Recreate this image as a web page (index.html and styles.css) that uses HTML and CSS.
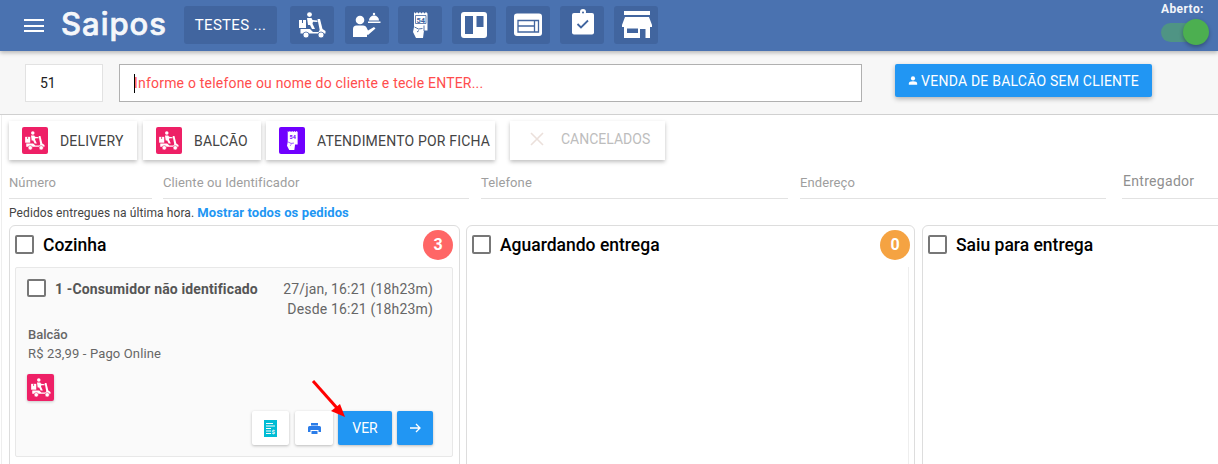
FILE: index.html
```html
<!DOCTYPE html>
<html lang="pt-BR">
<head>
<meta charset="utf-8">
<title>Saipos</title>
<link rel="stylesheet" href="styles.css">
</head>
<body>
<svg class="defs" width="0" height="0" aria-hidden="true">
  <symbol id="scooter" viewBox="0 0 27 26">
    <circle cx="10.500" cy="2.600" r="2.400" fill="#fff"/>
    <path fill="#fff" d="M8 6h4.500l1 2 5 .5V10l-4.500-.2-.5 2 2.500 5.200h-3l-2-4H9z"/>
    <path fill="#fff" d="M0 8h7v8H0z"/>
    <path fill="currentColor" d="M3 8h1v3H3z"/>
    <path fill="#fff" d="M18.500 7h2.500l2.500 10 3 2v2.500H1.500V17H11l3 3h5.500l1.200-2z"/>
    <circle cx="7" cy="23" r="3" fill="#fff" stroke="currentColor" stroke-width=".8"/>
    <circle cx="22" cy="23" r="3" fill="#fff" stroke="currentColor" stroke-width=".8"/>
  </symbol>
</svg>

<header class="topbar">
  <button class="menu" aria-label="Menu"><span></span><span></span><span></span></button>
  <div class="logo">Saipos</div>
  <div class="store">TESTES ...</div>
  <nav class="nav">
    <a class="nav-btn nav-first"><svg class="ico-scooter"><use href="#scooter"/></svg></a>
    <a class="nav-btn nav-second">
      <svg viewBox="0 0 44 38" class="fill">
        <circle cx="15" cy="14" r="4.300" fill="#fff"/>
        <path fill="#fff" d="M8 31V23q0-3.500 3.500-3.500H18q3 0 4 3l1 2 6-3.500 1.500 1.500L23 29l-1-.5V31z"/>
        <path fill="#fff" d="M23 15.500h12.500v1.500H23z"/>
        <path fill="#fff" d="M24 14.500a5 5 0 0 1 10 0z"/>
        <circle cx="29" cy="8" r="1.200" fill="#fff"/>
      </svg>
    </a>
    <a class="nav-btn">
      <svg viewBox="0 0 15 26" class="ico-ticket">
        <path fill="#fff" d="M1 0l1.500 1.500L4 0l1.500 1.500L7 0l1.500 1.500L10 0l1.500 1.500L13 0l1.500 1.500V18.500H11l-1 7.500H3L0 20l1-5z"/>
        <path fill="none" stroke="#41659f" stroke-width=".8" d="M2.500 3.500h10.500v8H2.500z"/>
        <text x="3.500" y="10.500" class="ticket-num">54</text>
        <path fill="none" stroke="#41659f" stroke-width=".9" d="M1.500 15l4 2 4-.5M4 20l2-1.500M11 13.500V19"/>
      </svg>
    </a>
    <a class="nav-btn">
      <svg viewBox="0 0 44 38" class="fill">
        <rect x="9" y="6" width="26" height="26" rx="3" fill="#fff"/>
        <rect x="13" y="10" width="8" height="18" fill="#41659f"/>
        <rect x="24.500" y="10" width="7" height="11" fill="#41659f"/>
      </svg>
    </a>
    <a class="nav-btn">
      <svg viewBox="0 0 44 38" class="fill">
        <rect x="8" y="7.500" width="28" height="22.500" rx="3" fill="#fff"/>
        <path fill="none" stroke="#41659f" stroke-width="1.300" d="M12 14.500h20.500v11.500H12zM12 20h16M28.500 14.500V26"/>
      </svg>
    </a>
    <a class="nav-btn">
      <svg viewBox="0 0 44 38" class="fill">
        <rect x="12" y="7" width="22" height="21.500" rx="2" fill="#fff"/>
        <circle cx="23" cy="6" r="3" fill="#fff"/>
        <circle cx="23" cy="6.500" r="1" fill="#41659f"/>
        <path fill="none" stroke="#41659f" stroke-width="1.800" d="M17.500 18l3.500 3.500 7-7"/>
      </svg>
    </a>
    <a class="nav-btn">
      <svg viewBox="0 0 44 38" class="fill">
        <path fill="#fff" d="M10 5h26v4H10zM11 11h24l3 8v2H8v-2z"/>
        <path fill="#fff" d="M10 21h26v11h-4.500V23H26v9H10z"/>
        <path fill="#41659f" d="M13 22.500h11v4.500H13z"/>
      </svg>
    </a>
  </nav>
  <div class="open">
    <div class="open-label">Aberto:</div>
    <div class="toggle"><span class="thumb"></span></div>
  </div>
</header>

<section class="toolbar">
  <div class="code">51</div>
  <div class="search"><span class="caret"></span>Informe o telefone ou nome do cliente e tecle ENTER...</div>
  <button class="sale">
    <svg viewBox="0 0 12 10" class="person"><circle cx="6" cy="2.500" r="2.500" fill="#fff"/><path fill="#fff" d="M1 10V8.500Q1 6 6 6t5 2.500V10z"/></svg>
    VENDA DE BALCÃO SEM CLIENTE
  </button>
</section>

<main class="content">
  <div class="tabs">
    <a class="tab tab-delivery"><span class="badge-ico pink"><svg><use href="#scooter"/></svg></span>DELIVERY</a>
    <a class="tab tab-balcao"><span class="badge-ico pink"><svg><use href="#scooter"/></svg></span>BALCÃO</a>
    <a class="tab tab-ficha"><span class="badge-ico purple">
      <svg viewBox="0 0 15 26" class="tk">
        <path fill="#fff" d="M1 0l1.500 1.500L4 0l1.500 1.500L7 0l1.500 1.500L10 0l1.500 1.500L13 0l1.500 1.500V18.500H11l-1 7.500H3L0 20l1-5z"/>
        <text x="3.500" y="10.500" class="ticket-num violet">54</text>
        <path fill="none" stroke="#7000ff" stroke-width=".9" d="M1.500 15l4 2 4-.5M4 20l2-1.500"/>
      </svg></span>ATENDIMENTO POR FICHA</a>
    <a class="tab tab-cancel"><svg viewBox="0 0 14 14" class="x"><path d="M1 1l12 12M13 1L1 13" stroke="#ebe0db" stroke-width="1.600" fill="none"/></svg>CANCELADOS</a>
  </div>

  <div class="filters">
    <div class="filter f-num">Número</div>
    <div class="filter f-client">Cliente ou Identificador</div>
    <div class="filter f-phone">Telefone</div>
    <div class="filter f-addr">Endereço</div>
    <div class="filter f-courier">Entregador</div>
  </div>

  <p class="info">Pedidos entregues na última hora. <a>Mostrar todos os pedidos</a></p>

  <div class="board">
    <section class="col col-a">
      <header class="col-head">
        <span class="check"></span><h2>Cozinha</h2><span class="count red">3</span>
      </header>
      <article class="card">
        <div class="card-top">
          <span class="check small"></span>
          <strong class="name">1 -Consumidor não identificado</strong>
          <div class="times"><div>27/jan, 16:21 (18h23m)</div><div>Desde 16:21 (18h23m)</div></div>
        </div>
        <div class="kind">Balcão</div>
        <div class="price">R$ 23,99 - Pago Online</div>
        <span class="badge-ico pink card-ico"><svg><use href="#scooter"/></svg></span>
        <div class="actions">
          <button class="act white w-receipt">
            <svg viewBox="0 0 13 17" class="receipt"><path fill="#00bcd4" d="M0 0h13v17H0z"/><path stroke="#fafafa" stroke-width="1" d="M2 3.500h7M2 6h9M2 8.500h5M2 11h5M2 13.500h5"/><text x="7.500" y="14" class="dollar">$</text></svg>
          </button>
          <button class="act white w-print">
            <svg viewBox="0 0 13 11" class="printer"><path fill="#2b7de9" d="M3 0h7v2.500H3zM1.500 3h10Q13 3 13 4.500V9h-2.500V7h-8v2H0V4.500Q0 3 1.500 3zM3.500 8h6v3h-6z"/></svg>
          </button>
          <button class="act blue w-ver">VER</button>
          <button class="act blue w-go">
            <svg viewBox="0 0 11 10" class="go"><path d="M0 5h9.500M6 1l4 4-4 4" stroke="#fff" stroke-width="1.300" fill="none"/></svg>
          </button>
        </div>
        <svg class="pointer" viewBox="0 0 40 42"><path d="M3 2L27 29" stroke="#f00" stroke-width="3" fill="none"/><path d="M35 38L21 32l9-7z" fill="#f00"/></svg>
      </article>
    </section>
    <section class="col col-b">
      <header class="col-head">
        <span class="check"></span><h2>Aguardando entrega</h2><span class="count orange">0</span>
      </header>
      <div class="empty"></div>
    </section>
    <section class="col col-c">
      <header class="col-head">
        <span class="check"></span><h2>Saiu para entrega</h2>
      </header>
    </section>
  </div>
</main>
</body>
</html>
```
FILE: styles.css
```css
* { box-sizing: border-box; }
html, body { margin: 0; padding: 0; height: 464px; overflow: hidden; }
body { font-family: Roboto, "Liberation Sans", sans-serif; background: #fff; color: #444; width: 1218px; }
.defs { position: absolute; }
button { font-family: inherit; border: 0; padding: 0; cursor: pointer; }
h2, p { margin: 0; }

/* top bar */
.topbar { height: 51px; background: #4a72b0; display: flex; align-items: flex-start; position: relative; z-index: 2; box-shadow: 0 2px 4px rgba(0,0,0,.25); }
.menu { width: 20px; margin: 19px 0 0 24px; height: 13px; background: none; display: flex; flex-direction: column; justify-content: space-between; }
.menu span { display: block; height: 2px; background: #fff; }
.logo { margin: 4px 0 0 17px; width: 123px; font-family: Inter, sans-serif; font-weight: 500; font-size: 31px; line-height: 40px; color: #fff; letter-spacing: 1px; -webkit-text-stroke: .7px #fff; opacity: .95; }
.store { width: 93px; height: 38px; margin-top: 6px; border-radius: 3px; background: #41659f; color: #fff; font-size: 15px; line-height: 39px; text-align: center; letter-spacing: .3px; }
.nav { display: flex; gap: 10px; margin: 6px 0 0 13px; }
.nav-btn { width: 44px; height: 38px; background: #41659f; border-radius: 3px; display: flex; align-items: center; justify-content: center; }
.nav-second { margin-left: 1px; margin-right: -1px; }
.nav-btn svg.fill { width: 44px; height: 38px; }
.ico-scooter { width: 27px; height: 26px; color: #41659f; }
.ico-ticket { width: 15px; height: 26px; }
.ticket-num { font: 700 7.500px Roboto, sans-serif; fill: #41659f; }
.ticket-num.violet { fill: #7000ff; }
.open { margin-left: auto; width: 57px; padding-top: 2px; }
.open-label { font-size: 12px; font-weight: 700; color: #f2f5fa; line-height: 14px; letter-spacing: .4px; }
.toggle { width: 34px; height: 19px; margin-top: 7px; border-radius: 10px; background: #4f9484; position: relative; }
.thumb { position: absolute; left: 22px; top: -4px; width: 26px; height: 26px; border-radius: 50%; background: #4caf50; box-shadow: 0 2px 4px rgba(0,0,0,.3); }

/* search row */
.toolbar { height: 64px; background: #f7f7f7; border-bottom: 1px solid #d0d0d0; padding: 13px 0 0 25px; display: flex; align-items: flex-start; }
.code { width: 78px; height: 38px; background: #fff; border: 1px solid #e2e2e2; font-size: 14px; line-height: 37px; padding-left: 14px; color: #222; }
.search { width: 743px; height: 38px; margin-left: 16px; background: #fff; border: 1px solid #b0b0b0; color: #ff4d4d; font-size: 14px; line-height: 37px; padding-left: 14px; position: relative; letter-spacing: .2px; }
.caret { position: absolute; left: 14px; top: 9px; width: 1px; height: 19px; background: #000; }
.sale { width: 257px; height: 33px; margin-left: 33px; background: #2196f3; color: #fff; font-size: 14px; letter-spacing: .22px; border-radius: 2px; box-shadow: 0 2px 5px rgba(0,0,0,.28); display: flex; align-items: center; justify-content: center; gap: 3px; }
.person { width: 10px; height: 9px; }

/* tabs */
.content { padding: 6px 0 0 0; border-left: 1px solid #eee; margin-left: 1px; }
.tabs { display: flex; margin-left: 7px; height: 39px; }
.tab { height: 39px; background: #fff; display: flex; align-items: center; font-size: 14px; color: #444; letter-spacing: .18px; box-shadow: 0 2px 4px rgba(0,0,0,.25); }
.tab-delivery { width: 128px; padding-left: 13px; }
.tab-balcao { width: 118px; margin-left: 6px; padding-left: 13px; }
.tab-ficha { width: 229px; margin-left: 5px; padding-left: 13px; }
.tab-cancel { width: 155px; margin-left: 15px; padding: 0 0 3px 20px; color: #bdbdbd; letter-spacing: 0; }
.badge-ico { width: 26px; height: 27px; border-radius: 2px; display: inline-flex; align-items: center; justify-content: center; flex: none; }
.badge-ico svg { width: 20px; height: 19px; color: #ee2066; }
.badge-ico svg.tk { width: 11px; height: 21px; }
.tab .badge-ico { margin-right: 12px; }
.pink { background: #ee2066; }
.purple { background: #7000ff; }
.x { width: 14px; height: 14px; margin-right: 17px; }

/* filters */
.filters { display: flex; margin-top: 8px; height: 31px; margin-left: 7px; }
.filter { height: 31px; border-bottom: 1px solid #e2e2e2; color: #9e9e9e; font-size: 13px; line-height: 30px; letter-spacing: .1px; }
.f-num { width: 143px; }
.f-client { width: 306px; margin-left: 11px; }
.f-phone { width: 307px; margin-left: 12px; }
.f-addr { width: 306px; margin-left: 12px; }
.f-courier { flex: 1; margin-left: 16px; padding-left: 1px; font-size: 14px; line-height: 27px; color: #8f8f8f; letter-spacing: .3px; }

.info { font-size: 12px; line-height: 14px; margin: 7px 0 0 7px; color: #444; letter-spacing: .1px; }
.info a { color: #2196f3; font-weight: 700; font-size: 13px; letter-spacing: .1px; }

/* board */
.board { display: flex; margin: 5px 0 0 7px; width: 1400px; }
.col { height: 400px; border: 1px solid #ddd; border-radius: 6px; background: #fff; padding: 0 5px; flex: none; }
.col-a { width: 451px; padding-right: 6px; }
.col-b { width: 449px; margin-left: 6px; }
.col-c { width: 400px; margin-left: 7px; }
.col-head { height: 41px; display: flex; align-items: flex-start; position: relative; padding-top: 9px; }
.check { width: 19px; height: 19px; border: 2px solid #777; border-radius: 2px; background: #fff; flex: none; }
h2 { font-size: 17.500px; font-weight: 500; color: #000; margin-left: 9px; line-height: 20px; }
.count { position: absolute; right: 0; top: 4px; width: 30px; height: 30px; border-radius: 50%; color: #fff; font-weight: 700; font-size: 16px; line-height: 29px; text-align: center; }
.red { background: #ff6666; }
.orange { background: #f5a342; right: -1px; }
.col-b .empty { height: 300px; border-right: 1px solid #eee; }

/* card */
.card { height: 190px; background: #fafafa; border: 1px solid #e8e8e8; border-radius: 2px; padding: 11px 19px 0 11px; position: relative; }
.card-top { display: flex; align-items: flex-start; height: 37px; }
.check.small { width: 19px; height: 18px; }
.name { font-size: 14px; font-weight: 700; color: #555; margin-left: 9px; line-height: 20px; white-space: nowrap; letter-spacing: .14px; }
.times { margin-left: auto; text-align: right; font-size: 14px; line-height: 20px; color: #666; letter-spacing: .18px; white-space: nowrap; }
.kind { margin: 10px 0 0 1px; font-size: 13px; line-height: 18px; font-weight: 500; color: #666; }
.price { margin: 1px 0 0 1px; font-size: 13px; line-height: 18px; color: #666; letter-spacing: .14px; }
.card-ico { width: 27px; height: 27px; margin-top: 11px; display: flex; box-shadow: 0 1px 3px rgba(0,0,0,.2); }
.actions { display: flex; justify-content: flex-end; margin-top: 10px; }
.act { height: 34px; border-radius: 2px; display: flex; align-items: center; justify-content: center; box-shadow: 0 1px 3px rgba(0,0,0,.25); }
.white { background: #fff; }
.blue { background: #2196f3; color: #fff; font-size: 14px; }
.w-receipt { width: 37px; }
.w-print { width: 38px; margin-left: 6px; }
.w-ver { width: 54px; margin-left: 5px; }
.w-go { width: 36px; margin-left: 5px; }
.receipt { width: 13px; height: 17px; }
.dollar { font: 700 6px Roboto, sans-serif; fill: #fafafa; }
.printer { width: 13px; height: 11px; }
.go { width: 11px; height: 10px; }
.pointer { position: absolute; left: 294px; top: 111px; width: 40px; height: 42px; }
```
